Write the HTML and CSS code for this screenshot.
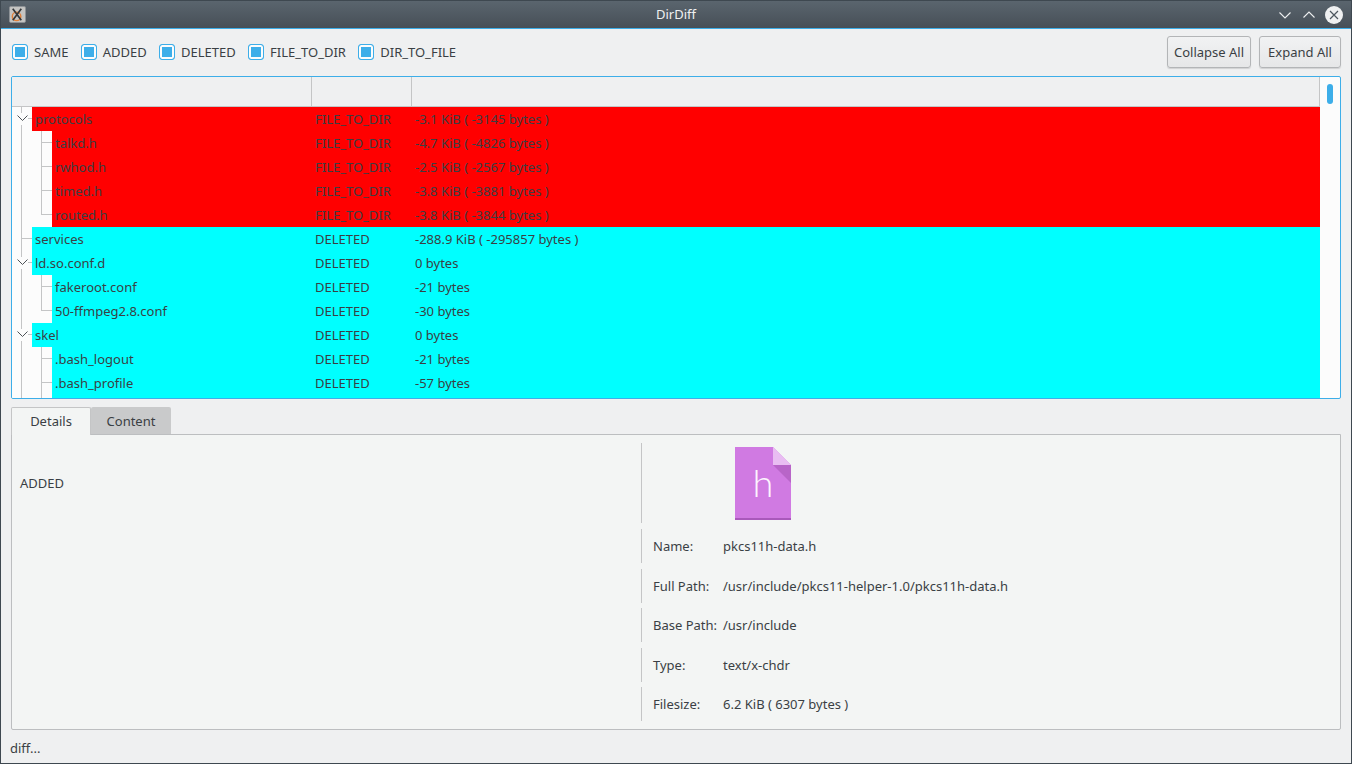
FILE: index.html
```html
<!DOCTYPE html>
<html>
	<head>
		<meta charset="UTF-8">
		<title>DirDiff</title>
		<link rel="stylesheet" href="styles.css">
	</head>
	<body>
		<div class="window">
			<div class="titlebar">
				<svg class="app-icon" width="17" height="17" viewBox="0 0 18 18">
					<rect x="0.5" y="0.5" width="17" height="17" rx="1.5" fill="#c4c4c2" stroke="#8d9296"/>
					<circle cx="8" cy="11" r="4.5" fill="none" stroke="#e0803a" stroke-width="1.5"/>
					<path d="M4 3 L13 15 M4 15 L13 3" stroke="#33373a" stroke-width="1.8" fill="none"/>
				</svg>
				<span class="title">DirDiff</span>
				<div class="win-buttons">
					<svg width="16" height="16" viewBox="0 0 16 16"><path d="M2.5 5.5 L8 11 L13.5 5.5" fill="none" stroke="#eff0f1" stroke-width="1.1"/></svg>
					<svg width="16" height="16" viewBox="0 0 16 16"><path d="M2.5 10.5 L8 5 L13.5 10.5" fill="none" stroke="#eff0f1" stroke-width="1.1"/></svg>
					<svg width="18" height="18" viewBox="0 0 18 18"><circle cx="9" cy="9" r="9" fill="#eff0f1"/><path d="M5 5 L13 13 M13 5 L5 13" stroke="#4d565e" stroke-width="1.2"/></svg>
				</div>
			</div>

			<div class="toolbar">
				<label class="check"><span class="box"></span>SAME</label>
				<label class="check"><span class="box"></span>ADDED</label>
				<label class="check"><span class="box"></span>DELETED</label>
				<label class="check"><span class="box"></span>FILE_TO_DIR</label>
				<label class="check"><span class="box"></span>DIR_TO_FILE</label>
				<div class="spacer"></div>
				<button class="btn btn-collapse">Collapse All</button>
				<button class="btn btn-expand">Expand All</button>
			</div>

			<div class="tree">
				<div class="tree-main">
					<div class="tree-head">
						<div class="head-a"></div>
						<div class="head-b"></div>
						<div class="head-c"></div>
					</div>
					<div class="tree-body">
						<div class="row red">
							<span class="guide open"><svg width="11" height="7" viewBox="0 0 11 7"><path d="M0.5 0.5 L5.5 5.5 L10.5 0.5" fill="none" stroke="#4d5257" stroke-width="1"/></svg></span>
							<span class="name top">protocols</span><span class="kind">FILE_TO_DIR</span><span class="size">-3.1 KiB ( -3145 bytes )</span>
						</div>
						<div class="row red">
							<span class="guide pass"></span><span class="guide tee"></span>
							<span class="name">talkd.h</span><span class="kind">FILE_TO_DIR</span><span class="size">-4.7 KiB ( -4826 bytes )</span>
						</div>
						<div class="row red">
							<span class="guide pass"></span><span class="guide tee"></span>
							<span class="name">rwhod.h</span><span class="kind">FILE_TO_DIR</span><span class="size">-2.5 KiB ( -2567 bytes )</span>
						</div>
						<div class="row red">
							<span class="guide pass"></span><span class="guide tee"></span>
							<span class="name">timed.h</span><span class="kind">FILE_TO_DIR</span><span class="size">-3.8 KiB ( -3881 bytes )</span>
						</div>
						<div class="row red">
							<span class="guide pass"></span><span class="guide end"></span>
							<span class="name">routed.h</span><span class="kind">FILE_TO_DIR</span><span class="size">-3.8 KiB ( -3844 bytes )</span>
						</div>
						<div class="row cyan">
							<span class="guide tee"></span>
							<span class="name top">services</span><span class="kind">DELETED</span><span class="size">-288.9 KiB ( -295857 bytes )</span>
						</div>
						<div class="row cyan">
							<span class="guide open"><svg width="11" height="7" viewBox="0 0 11 7"><path d="M0.5 0.5 L5.5 5.5 L10.5 0.5" fill="none" stroke="#4d5257" stroke-width="1"/></svg></span>
							<span class="name top">ld.so.conf.d</span><span class="kind">DELETED</span><span class="size">0 bytes</span>
						</div>
						<div class="row cyan">
							<span class="guide pass"></span><span class="guide tee"></span>
							<span class="name">fakeroot.conf</span><span class="kind">DELETED</span><span class="size">-21 bytes</span>
						</div>
						<div class="row cyan">
							<span class="guide pass"></span><span class="guide end"></span>
							<span class="name">50-ffmpeg2.8.conf</span><span class="kind">DELETED</span><span class="size">-30 bytes</span>
						</div>
						<div class="row cyan">
							<span class="guide open"><svg width="11" height="7" viewBox="0 0 11 7"><path d="M0.5 0.5 L5.5 5.5 L10.5 0.5" fill="none" stroke="#4d5257" stroke-width="1"/></svg></span>
							<span class="name top">skel</span><span class="kind">DELETED</span><span class="size">0 bytes</span>
						</div>
						<div class="row cyan">
							<span class="guide pass"></span><span class="guide tee"></span>
							<span class="name">.bash_logout</span><span class="kind">DELETED</span><span class="size">-21 bytes</span>
						</div>
						<div class="row cyan">
							<span class="guide pass"></span><span class="guide tee"></span>
							<span class="name">.bash_profile</span><span class="kind">DELETED</span><span class="size">-57 bytes</span>
						</div>
						<div class="row cyan">
							<span class="guide pass"></span><span class="guide tee"></span>
							<span class="name"></span><span class="kind"></span><span class="size"></span>
						</div>
					</div>
				</div>
				<div class="scrollbar"><div class="handle"></div></div>
			</div>

			<div class="tabs">
				<div class="tab active">Details</div>
				<div class="tab">Content</div>
			</div>
			<div class="panel">
				<div class="panel-left">ADDED</div>
				<div class="panel-right">
					<div class="info icon-row">
						<svg width="56" height="73" viewBox="0 0 56 73">
							<path d="M0 0 H38 L56 18 V73 H0 Z" fill="#d07ae2"/>
							<path d="M0 71 H56 V73 H0 Z" fill="#a959bb"/>
							<path d="M38 18 H56 V36 Z" fill="#b865c8"/>
							<path d="M38 0 L56 18 H38 Z" fill="#e9bdf2"/>
							<text class="mime" x="28" y="50" text-anchor="middle">h</text>
						</svg>
					</div>
					<div class="info"><span class="label">Name:</span><span>pkcs11h-data.h</span></div>
					<div class="info"><span class="label">Full Path:</span><span>/usr/include/pkcs11-helper-1.0/pkcs11h-data.h</span></div>
					<div class="info"><span class="label">Base Path:</span><span>/usr/include</span></div>
					<div class="info"><span class="label">Type:</span><span>text/x-chdr</span></div>
					<div class="info"><span class="label">Filesize:</span><span>6.2 KiB ( 6307 bytes )</span></div>
				</div>
			</div>
			<div class="status">diff...</div>
		</div>
	</body>
</html>
```

FILE: styles.css
```css
html,body{
	margin: 0;
	padding: 0;
}
body{
	font-family: "Noto Sans", sans-serif;
	font-size: 13px;
	color: #3a3f44;
	background: #eff0f1;
}
.window{
	width: 1352px;
	height: 764px;
	box-sizing: border-box;
	display: flex;
	flex-direction: column;
	border: 1px solid #3e4850;
	border-top: 0;
	overflow: hidden;
}
.titlebar{
	height: 28px;
	flex: none;
	margin: 0 -1px;
	padding: 0 9px 0 9px;
	display: flex;
	align-items: center;
	justify-content: space-between;
	background: linear-gradient(#5a656e, #474f57);
	border-top: 1px solid #3e4850;
	box-sizing: border-box;
	color: #eff0f1;
}
.title{
	flex: 1;
	text-align: center;
	padding-left: 49px;
	margin-bottom: 2px;
}
.app-icon{
	flex: none;
	margin-bottom: 1px;
}
.win-buttons{
	display: flex;
	align-items: center;
	gap: 8px;
}
.toolbar{
	height: 45px;
	padding: 0 10px 2px;
	flex: none;
	border-top: 1px solid #3daee9;
	display: flex;
	align-items: center;
}
.check{
	display: flex;
	align-items: center;
	margin-right: 11.3px;
	height: 18px;
}
.box{
	width: 14px;
	height: 14px;
	margin: 0 6px 0 1px;
	border: 1px solid #3daee9;
	border-radius: 3px;
	background: #3daee9;
	box-shadow: inset 0 0 0 2px #fcfcfc;
	flex: none;
}
.spacer{
	flex: 1;
}
.btn{
	height: 32px;
	font: inherit;
	color: inherit;
	border: 1px solid #b3b5b7;
	border-radius: 3px;
	background: linear-gradient(#f1f2f3, #e6e7e8);
	box-shadow: 0 1px 1px #d0d1d2;
	padding: 0;
}
.btn-collapse{
	width: 84px;
	margin-right: 8px;
}
.btn-expand{
	width: 82px;
}
.tree{
	height: 323px;
	flex: none;
	margin: 0 10px;
	box-sizing: border-box;
	border: 1px solid #3daee9;
	border-radius: 2px;
	background: #fcfcfc;
	display: flex;
	overflow: hidden;
}
.tree-main{
	width: 1308px;
	flex: none;
	display: flex;
	flex-direction: column;
}
.tree-head{
	height: 30px;
	flex: none;
	box-sizing: border-box;
	display: flex;
	background: #eff0f1;
	border-bottom: 1px solid #c4c5c6;
}
.head-a,.head-b,.head-c{
	border-right: 1px solid #c4c5c6;
	box-sizing: border-box;
}
.head-a{
	width: 300px;
}
.head-b{
	width: 100px;
}
.head-c{
	flex: 1;
}
.tree-body{
	flex: 1;
	overflow: hidden;
}
.row{
	height: 24px;
	display: flex;
	line-height: 24px;
	white-space: nowrap;
}
.guide{
	width: 20px;
	flex: none;
	background-color: #fcfcfc;
	background-repeat: no-repeat;
	display: flex;
	align-items: center;
	justify-content: center;
}
.guide.pass{
	background-image: linear-gradient(#c4c5c6, #c4c5c6);
	background-size: 1px 100%;
	background-position: 9px 0;
}
.guide.tee{
	background-image: linear-gradient(#c4c5c6, #c4c5c6), linear-gradient(#c4c5c6, #c4c5c6);
	background-size: 1px 100%, 10px 1px;
	background-position: 9px 0, 10px 11px;
}
.guide.end{
	background-image: linear-gradient(#c4c5c6, #c4c5c6), linear-gradient(#c4c5c6, #c4c5c6);
	background-size: 1px 12px, 10px 1px;
	background-position: 9px 0, 10px 11px;
}
.guide.open{
	background-image: linear-gradient(#c4c5c6, #c4c5c6), linear-gradient(#c4c5c6, #c4c5c6);
	background-size: 1px 100%, 5px 1px;
	background-position: 9px 0, 15px 11px;
}
.guide.open svg{
	background: #fcfcfc;
	padding: 2px 0 3px;
}
.name{
	width: 257px;
	padding-left: 3px;
	flex: none;
	overflow: hidden;
}
.name.top{
	width: 277px;
}
.kind{
	width: 100px;
	padding-left: 3px;
	flex: none;
}
.size{
	flex: 1;
}
.red .name,.red .kind,.red .size{
	background: #f00;
}
.cyan .name,.cyan .kind,.cyan .size{
	background: #0ff;
}
.scrollbar{
	flex: 1;
	padding: 7px 0 0 7px;
}
.handle{
	width: 6px;
	height: 20px;
	border-radius: 3px;
	background: #3daee9;
}
.tabs{
	flex: none;
	margin: 8px 10px -1px;
	display: flex;
	height: 28px;
	position: relative;
}
.tab{
	width: 80px;
	box-sizing: border-box;
	text-align: center;
	line-height: 28px;
	background: #c9cacb;
	border-radius: 2px 2px 0 0;
	border-bottom: 1px solid #bcbec0;
}
.tab.active{
	background: #f3f5f4;
	border: 1px solid #c4c5c6;
	border-bottom: 0;
	line-height: 26px;
}
.panel{
	height: 296px;
	flex: none;
	box-sizing: border-box;
	margin: 0 10px;
	background: #f3f5f4;
	border: 1px solid #bcbec0;
	border-radius: 0 0 2px 2px;
	padding: 8px 0 0 8px;
	display: flex;
}
.panel-left{
	width: 621px;
	height: 80px;
	line-height: 80px;
	flex: none;
}
.panel-right{
	flex: 1;
}
.info{
	height: 34px;
	margin-bottom: 5.5px;
	border-left: 1px solid #c4c5c6;
	padding-left: 11px;
	display: flex;
	align-items: center;
}
.icon-row{
	height: 80px;
	margin-bottom: 6px;
	padding-left: 93px;
	align-items: flex-start;
	padding-top: 4px;
	box-sizing: border-box;
}
.label{
	width: 70px;
	flex: none;
}
.mime{
	font-family: "Lato", sans-serif;
	font-weight: 300;
	font-size: 38px;
	fill: #fdf4fe;
}
.status{
	flex: 1;
	padding: 3px 0 0 9px;
	display: flex;
	align-items: center;
}
```
